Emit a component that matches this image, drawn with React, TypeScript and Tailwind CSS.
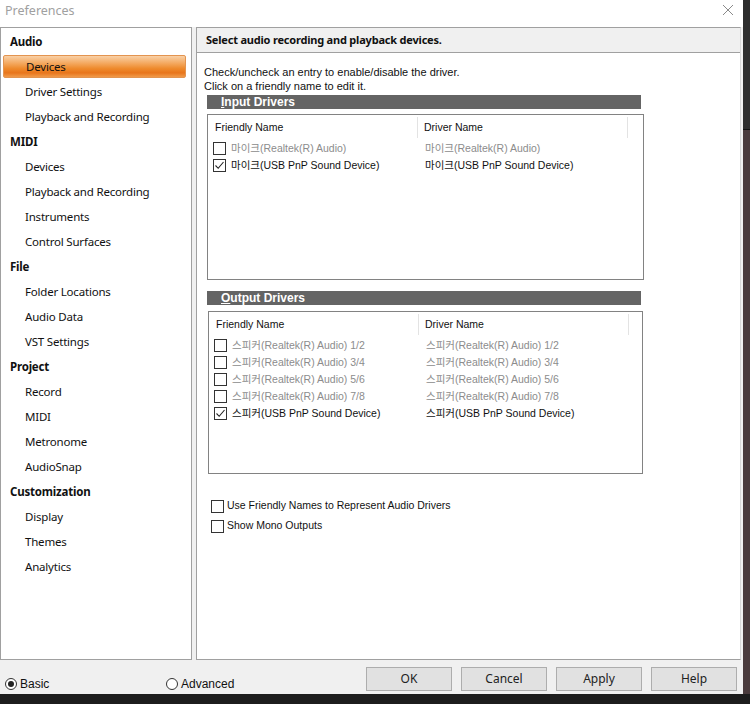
import React from 'react';

const ui = "font-['Noto_Sans',sans-serif]";
const ms = "font-['Liberation_Sans','Noto_Sans_CJK_KR',sans-serif]";

const nav: { label: string; cat?: boolean; active?: boolean }[] = [
    { label: 'Audio', cat: true },
    { label: 'Devices', active: true },
    { label: 'Driver Settings' },
    { label: 'Playback and Recording' },
    { label: 'MIDI', cat: true },
    { label: 'Devices' },
    { label: 'Playback and Recording' },
    { label: 'Instruments' },
    { label: 'Control Surfaces' },
    { label: 'File', cat: true },
    { label: 'Folder Locations' },
    { label: 'Audio Data' },
    { label: 'VST Settings' },
    { label: 'Project', cat: true },
    { label: 'Record' },
    { label: 'MIDI' },
    { label: 'Metronome' },
    { label: 'AudioSnap' },
    { label: 'Customization', cat: true },
    { label: 'Display' },
    { label: 'Themes' },
    { label: 'Analytics' },
];

const inputs = [
    { name: '마이크(Realtek(R) Audio)', on: false },
    { name: '마이크(USB PnP Sound Device)', on: true },
];

const outputs = [
    { name: '스피커(Realtek(R) Audio) 1/2', on: false },
    { name: '스피커(Realtek(R) Audio) 3/4', on: false },
    { name: '스피커(Realtek(R) Audio) 5/6', on: false },
    { name: '스피커(Realtek(R) Audio) 7/8', on: false },
    { name: '스피커(USB PnP Sound Device)', on: true },
];

const Check: React.FC<{ on?: boolean }> = ({ on }) => (
    <span className="w-[13px] h-[13px] shrink-0 border border-[#333] bg-white flex items-center justify-center">
        {on && (
            <svg width="11" height="11" viewBox="0 0 11 11">
                <polyline points="1.5,5.5 4.2,8.3 9.5,2" fill="none" stroke="#222" strokeWidth="1.1" />
            </svg>
        )}
    </span>
);

const Bar: React.FC<{ first: string; rest: string; className?: string }> = ({ first, rest, className }) => (
    <div className={`h-[14px] w-[434px] bg-[#646464] text-white font-bold text-[12px] leading-[14px] pl-[14px] ${className ?? ''}`}>
        <span className="underline">{first}</span>{rest}
    </div>
);

const DriverList: React.FC<{ rows: { name: string; on: boolean }[]; className?: string }> = ({ rows, className }) => (
    <div className={`border border-[#828282] bg-white text-[10.5px] ${className ?? ''}`}>
        <div className="h-[25px] flex text-[#111]">
            <div className="w-[210px] pl-[7px] flex items-center border-r border-[#e3e3e3] my-[2px]">Friendly Name</div>
            <div className="w-[210px] pl-[6px] flex items-center border-r border-[#e3e3e3] my-[2px]">Driver Name</div>
        </div>
        {rows.map((r, i) => (
            <div key={i} className={`h-[17px] flex items-center ${r.on ? 'text-[#111]' : 'text-[#8c8c8c]'}`}>
                <div className="w-[210px] pl-[5px] flex items-center gap-[5px]">
                    <Check on={r.on} />
                    <span className="whitespace-nowrap">{r.name}</span>
                </div>
                <div className="pl-[7px] whitespace-nowrap">{r.name}</div>
            </div>
        ))}
    </div>
);

export default function App() {
    return (
        <div className="w-[750px] h-[704px] flex flex-col bg-[#1d1d1d] overflow-hidden">
            <div className="h-[694px] flex">
                {/* dialog */}
                <div className="w-[743px] flex flex-col bg-[#f0f0f0]">
                    <div className="h-[27px] bg-white flex items-center justify-between pl-[5px] pr-[9px]">
                        <span className={`${ui} text-[12.5px] text-[#a0a0a0] -mt-[5px]`}>Preferences</span>
                        <svg width="12" height="12" viewBox="0 0 12 12" className="-mt-[8px]">
                            <path d="M1 1L11 11M11 1L1 11" stroke="#8a8a8a" strokeWidth="1" />
                        </svg>
                    </div>

                    <div className="h-[633px] flex gap-[4px]">
                        {/* nav */}
                        <div className={`w-[192px] border border-[#a0a0a0] bg-white pt-[1px] ${ui} text-[11.5px] tracking-[-0.2px] text-[#111]`}>
                            {nav.map((n, i) => (
                                <div key={i} className="h-[25px] flex items-center">
                                    {n.active ? (
                                        <div className="ml-[2px] w-[183px] h-[23px] flex items-center pl-[22px] rounded-[2px] border border-[#e39450] bg-[linear-gradient(to_bottom,#f9d0a6_0%,#f4a85e_35%,#ee8a2c_60%,#e8751b_80%,#f09a4a_100%)]">
                                            {n.label}
                                        </div>
                                    ) : (
                                        <span className={n.cat ? 'pl-[9px] font-bold' : 'pl-[24px]'}>{n.label}</span>
                                    )}
                                </div>
                            ))}
                        </div>

                        {/* content */}
                        <div className="w-[545px] flex flex-col border border-[#a0a0a0] border-r-[#d8d8d8] bg-white">
                            <div className={`h-[25px] bg-[#f0f0f0] border-b border-[#a0a0a0] flex items-center pl-[9px] ${ui} font-bold text-[11px] tracking-[-0.2px] text-[#111]`}>
                                Select audio recording and playback devices.
                            </div>
                            <div className={`flex-1 pt-[12px] ${ms} text-[#111]`}>
                                <div className="pl-[7px] text-[11px] leading-[14px]">
                                    <div>Check/uncheck an entry to enable/disable the driver.</div>
                                    <div>Click on a friendly name to edit it.</div>
                                </div>
                                <Bar first="I" rest="nput Drivers" className="ml-[10px] mt-[2px]" />
                                <DriverList rows={inputs} className="ml-[10px] mt-[5px] w-[437px] h-[166px]" />
                                <Bar first="O" rest="utput Drivers" className="ml-[10px] mt-[11px]" />
                                <DriverList rows={outputs} className="ml-[11px] mt-[6px] w-[435px] h-[163px]" />
                                <div className="ml-[14px] mt-[22px] text-[10.5px]">
                                    <div className="h-[20px] flex items-center gap-[3px]">
                                        <Check />
                                        <span>Use Friendly Names to Represent Audio Drivers</span>
                                    </div>
                                    <div className="h-[20px] flex items-center gap-[3px]">
                                        <Check />
                                        <span>Show Mono Outputs</span>
                                    </div>
                                </div>
                            </div>
                        </div>
                    </div>

                    {/* footer */}
                    <div className="h-[34px] flex items-start pt-[7px] pr-[6px]">
                        <div className={`w-[362px] flex items-center pl-[5px] mt-[8px] ${ms} text-[12px] text-[#111]`}>
                            <div className="w-[161px] flex items-center gap-[3px]">
                                <span className="w-[12px] h-[12px] rounded-full border border-[#333] bg-white flex items-center justify-center">
                                    <span className="w-[6px] h-[6px] rounded-full bg-[#222]" />
                                </span>
                                Basic
                            </div>
                            <div className="flex items-center gap-[3px]">
                                <span className="w-[12px] h-[12px] rounded-full border border-[#333] bg-white" />
                                Advanced
                            </div>
                        </div>
                        <div className={`ml-auto flex gap-[9px] ${ui} text-[12px] text-[#222]`}>
                            {['OK', 'Cancel', 'Apply', 'Help'].map((b) => (
                                <button key={b} className="w-[86px] h-[24px] bg-[#e1e1e1] border border-[#adadad] flex items-center justify-center">
                                    {b}
                                </button>
                            ))}
                        </div>
                    </div>
                </div>

                {/* background strip */}
                <div className="flex-1 flex flex-col">
                    <div className="h-[130px] bg-[#2e2e2e] border-b border-[#111]" />
                    <div className="flex-1 bg-[#4a3b3d]" />
                </div>
            </div>
            <div className="h-[10px] bg-[#1d1d1d]" />
        </div>
    );
}
